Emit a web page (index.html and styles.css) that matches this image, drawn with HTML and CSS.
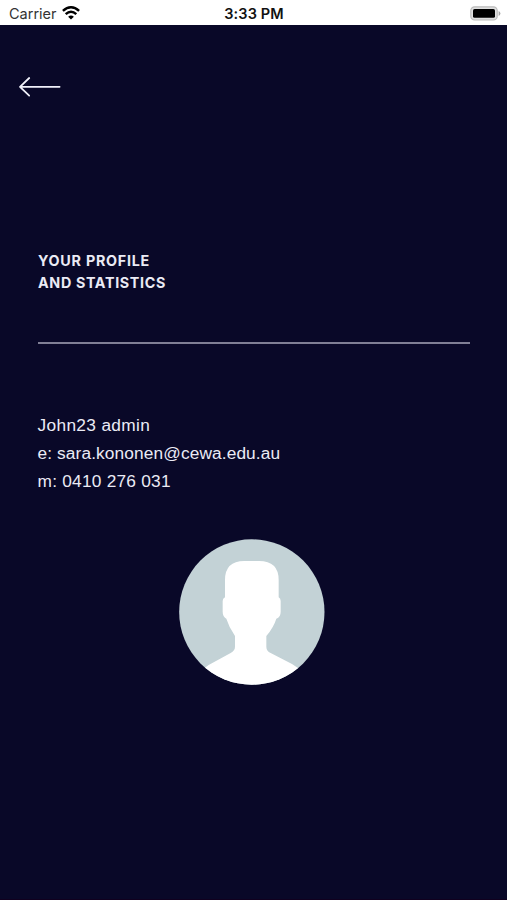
FILE: index.html
```html
<!DOCTYPE html>
<html lang="en">
<head>
<meta charset="utf-8">
<title>Your profile and statistics</title>
<link rel="stylesheet" href="styles.css">
</head>
<body>
<header class="status">
  <div class="carrier">
    <span class="carrier-name">Carrier</span>
    <svg class="wifi" width="18" height="14" viewBox="0 0 18 14" fill="none" stroke="#000" stroke-width="2.5">
      <path d="M.9 4.9Q9-2.3 17.1 4.9"/>
      <path d="M3.7 8.1Q9 3.4 14.3 8.1"/>
      <path d="M9 13.6 6.1 10.7Q9 8.4 11.9 10.7Z" fill="#000" stroke="none"/>
    </svg>
  </div>
  <time class="clock">3:33 PM</time>
  <svg class="battery" width="31" height="15" viewBox="0 0 31 15">
    <rect x=".8" y=".8" width="26.4" height="13.2" rx="3.8" fill="#e0e0e0" stroke="#bcbcbc" stroke-width="1.2"/>
    <rect x="3" y="3" width="22" height="8.8" rx="1.6" fill="#000"/>
    <path d="M28.6 5v5q1.8-.8 1.8-2.5T28.6 5Z" fill="#a8a8a8"/>
  </svg>
</header>
<main class="screen">
  <a class="back" href="#" aria-label="Back">
    <svg width="44" height="22" viewBox="0 0 44 22" fill="none" stroke="#f0f0fa" stroke-width="1.8" stroke-linecap="round" stroke-linejoin="round">
      <path d="M41.6 10.8H2M11.2 2 2 10.8l9.2 8.8"/>
    </svg>
  </a>
  <h1 class="title"><span class="title-a">YOUR PROFILE</span><br><span class="title-b">AND STATISTICS</span></h1>
  <hr class="rule">
  <section class="details">
    <p class="name">John23 admin</p>
    <p class="email">e: sara.kononen@cewa.edu.au</p>
    <p class="mobile">m: 0410 276 031</p>
  </section>
  <svg class="avatar" width="146" height="146" viewBox="27 27 438 438">
    <clipPath id="disc"><circle cx="245.5" cy="246" r="218"/></clipPath>
    <g clip-path="url(#disc)">
      <path fill="#c3d2d6" d="M27 27h438v438H27z"/>
      <path fill="#fff" d="M165 202V150Q165 93 223 93H267Q326 93 326 150V202Q332 206 332 213V245Q332 262 319 266Q311 292 289 318V350Q289 363 302 369L366 402Q386 413 400 430V470H90V430Q100 414 116 405L182 369Q195 362 195 350V318Q177 292 169 266Q158 260 158 245V213Q158 205 165 202Z"/>
    </g>
  </svg>
</main>
</body>
</html>
```
FILE: styles.css
```css
* {
  box-sizing: border-box;
}

body {
  margin: 0;
  height: 900px;
  display: flex;
  flex-direction: column;
  overflow: hidden;
  background: #090828;
  color: #ebebf5;
  font-family: "Liberation Sans", Arial, sans-serif;
}

.status {
  height: 25px;
  flex: none;
  display: grid;
  grid-template-columns: 1fr auto 1fr;
  align-items: center;
  padding: 2px 6px 0 9px;
  background: #fff;
  color: #111;
  font-family: Inter, sans-serif;
  font-size: 14.5px;
  line-height: 22px;
}

.carrier {
  display: flex;
  align-items: center;
  gap: 5px;
}

.carrier-name {
  color: #333;
}

.wifi {
  margin-top: -2px;
}

.clock {
  margin-right: 2px;
  font-weight: 600;
  letter-spacing: 0.1px;
}

.battery {
  justify-self: end;
}

.screen {
  flex: 1;
  display: flex;
  flex-direction: column;
  padding: 51px 37px 0;
  border-bottom: 1px solid #10001f;
}

.back {
  height: 22px;
  width: 44px;
  margin-left: -19px;
}

.back svg {
  display: block;
}

.title {
  margin: 152px 0 0 1px;
  font: 700 14.3px/22px Inter, sans-serif;
  letter-spacing: 0.76px;
}

.title-b {
  letter-spacing: 0.66px;
}

.rule {
  width: 432px;
  height: 2px;
  margin: 48px 0 0 1px;
  border: 0;
  background: #807f95;
}

.details {
  margin: 67px 0 0 0.5px;
  font-size: 17.3px;
  line-height: 28px;
}

.details p {
  margin: 0;
}

.name {
  letter-spacing: 0.34px;
}

.email {
  letter-spacing: 0.12px;
}

.mobile {
  letter-spacing: 0.24px;
}

.avatar {
  margin: 44px 0 0 142px;
}
```
